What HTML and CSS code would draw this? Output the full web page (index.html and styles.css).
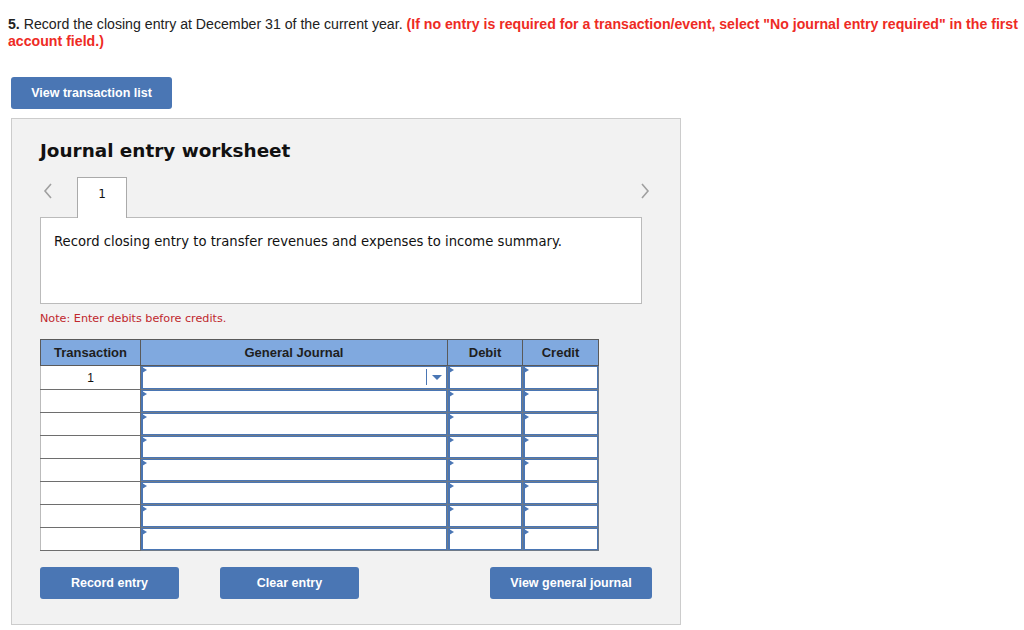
FILE: index.html
```html
<!DOCTYPE html>
<html>
<head>
<meta charset="utf-8">
<link rel="stylesheet" href="styles.css">
</head>
<body>
<p class="question"><b>5.</b> Record the closing entry at December 31 of the current year. <span class="warn">(If no entry is required for a transaction/event, select "No journal entry required" in the first account field.)</span></p>
<div class="content">
  <button class="btn btn-list">View transaction list</button>
  <div class="worksheet">
    <h2 class="ws-title">Journal entry worksheet</h2>
    <div class="tabs">
      <span class="chev chev-left"><svg width="10" height="16" viewBox="0 0 10 16"><path d="M8 1 L2 8 L8 15" fill="none" stroke="#a0a0a0" stroke-width="1.6"/></svg></span>
      <div class="tab">1</div>
      <span class="spacer"></span>
      <span class="chev chev-right"><svg width="10" height="16" viewBox="0 0 10 16"><path d="M2 1 L8 8 L2 15" fill="none" stroke="#a0a0a0" stroke-width="1.6"/></svg></span>
    </div>
    <div class="desc">Record closing entry to transfer revenues and expenses to income summary.</div>
    <p class="note">Note: Enter debits before credits.</p>
    <table class="journal">
      <colgroup><col class="c-tr"><col class="c-gj"><col class="c-dr"><col class="c-cr"></colgroup>
      <thead><tr><th>Transaction</th><th>General Journal</th><th>Debit</th><th>Credit</th></tr></thead>
      <tbody>
        <tr class="first"><td class="tr">1</td><td class="in"><div class="fld sel"><span class="dd"></span></div></td><td class="in"><div class="fld"></div></td><td class="in"><div class="fld"></div></td></tr>
        <tr><td class="tr"></td><td class="in"><div class="fld"></div></td><td class="in"><div class="fld"></div></td><td class="in"><div class="fld"></div></td></tr>
        <tr><td class="tr"></td><td class="in"><div class="fld"></div></td><td class="in"><div class="fld"></div></td><td class="in"><div class="fld"></div></td></tr>
        <tr><td class="tr"></td><td class="in"><div class="fld"></div></td><td class="in"><div class="fld"></div></td><td class="in"><div class="fld"></div></td></tr>
        <tr><td class="tr"></td><td class="in"><div class="fld"></div></td><td class="in"><div class="fld"></div></td><td class="in"><div class="fld"></div></td></tr>
        <tr><td class="tr"></td><td class="in"><div class="fld"></div></td><td class="in"><div class="fld"></div></td><td class="in"><div class="fld"></div></td></tr>
        <tr><td class="tr"></td><td class="in"><div class="fld"></div></td><td class="in"><div class="fld"></div></td><td class="in"><div class="fld"></div></td></tr>
        <tr><td class="tr"></td><td class="in"><div class="fld"></div></td><td class="in"><div class="fld"></div></td><td class="in"><div class="fld"></div></td></tr>
      </tbody>
    </table>
    <div class="actions">
      <button class="btn btn-rec">Record entry</button>
      <button class="btn btn-clr">Clear entry</button>
      <button class="btn btn-view">View general journal</button>
    </div>
  </div>
</div>
</body>
</html>
```
FILE: styles.css
```css
html, body { margin: 0; padding: 0; background: #fff; }
body { font-family: "Liberation Sans", Arial, sans-serif; color: #222; }

.question {
  margin: 0;
  padding: 16px 4px 0 8px;
  font-size: 14.15px;
  line-height: 17px;
  color: #222;
}
.question b { font-weight: bold; }
.warn { color: #ee2b24; font-weight: bold; }

.content { padding-left: 11px; padding-top: 27px; }

.btn {
  display: block;
  border: none;
  border-radius: 3px;
  background: #4a76b4;
  color: #fff;
  font-family: "Liberation Sans", Arial, sans-serif;
  font-weight: bold;
  font-size: 12.5px;
  height: 32px;
  padding: 0;
  cursor: pointer;
}
.btn-list { width: 161px; }

.worksheet {
  margin-top: 9px;
  background: #f2f2f2;
  border: 1px solid #cccccc;
  padding: 0 0 0 28px;
  box-sizing: border-box;
  width: 670px;
  height: 507px;
}

.ws-title {
  margin: 0;
  padding-top: 21px;
  font-family: "DejaVu Sans", Verdana, sans-serif;
  font-weight: bold;
  font-size: 18.4px;
  line-height: 22px;
  color: #111;
}

.tabs {
  display: flex;
  align-items: flex-end;
  margin-top: 15px;
  height: 40px;
  width: 612px;
}
.chev { display: flex; align-items: center; height: 40px; padding-bottom: 12px; box-sizing: border-box; }
.chev-left { width: 37px; padding-left: 3px; }
.chev-right { width: 12px; padding-right: 2px; }
.spacer { flex: 1; }
.tab {
  width: 50px;
  height: 41px;
  margin-bottom: -1px;
  background: #fff;
  border: 1px solid #aaaaaa;
  border-bottom: none;
  box-sizing: border-box;
  text-align: center;
  font-family: "DejaVu Sans", Verdana, sans-serif;
  font-size: 12px;
  line-height: 32px;
  color: #111;
  position: relative;
  z-index: 1;
}

.desc {
  width: 602px;
  height: 87px;
  box-sizing: border-box;
  background: #fff;
  border: 1px solid #bbbbbb;
  padding: 15px 13px 13px 13px;
  font-family: "DejaVu Sans", Verdana, sans-serif;
  font-size: 13.2px;
  line-height: 18px;
  color: #111;
}

.note {
  margin: 0;
  padding-top: 8px;
  font-family: "DejaVu Sans", Verdana, sans-serif;
  font-size: 11.2px;
  line-height: 14px;
  color: #c0272d;
}

.journal {
  margin-top: 13px;
  border-collapse: collapse;
  table-layout: fixed;
  width: 558px;
  border: 1px solid #707070;
}
.c-tr { width: 100px; }
.c-gj { width: 307px; }
.c-dr { width: 75px; }
.c-cr { width: 76px; }

.journal th {
  background: #80a9df;
  border: 1px solid #5a5a5a;
  height: 25px;
  padding: 0;
  font-size: 13px;
  font-weight: bold;
  color: #1e1e1e;
  text-align: center;
}
.journal td {
  height: 22px;
  padding: 0;
  background: #fff;
  border: 1px solid #6e6e6e;
}
.journal tr.first td { height: 23px; }
.journal td.tr {
  text-align: center;
  font-size: 12px;
  color: #111;
  border-left-color: #bbbbbb;
}
.journal td.in { border-color: #6f7a88; }
.fld {
  position: relative;
  height: 20px;
  border: 1px solid #4a76b4;
  border-width: 1px 1px 1px 2px;
  background: #fff;
}
.journal tr.first .fld { height: 21px; }
.fld::before {
  content: "";
  position: absolute;
  left: -1px;
  top: 0;
  border-left: 5px solid #4a76b4;
  border-top: 3px solid transparent;
  border-bottom: 3px solid transparent;
}
.dd {
  position: absolute;
  right: 0;
  top: 2px;
  width: 19px;
  height: 16px;
  border-left: 1px solid #4a76b4;
}
.dd::after {
  content: "";
  position: absolute;
  left: 5px;
  top: 6px;
  border-top: 5px solid #4a76b4;
  border-left: 5px solid transparent;
  border-right: 5px solid transparent;
}

.actions {
  display: flex;
  margin-top: 16px;
  width: 612px;
}
.btn-rec { width: 139px; }
.btn-clr { width: 139px; margin-left: 41px; }
.btn-view { width: 162px; margin-left: auto; }
```
